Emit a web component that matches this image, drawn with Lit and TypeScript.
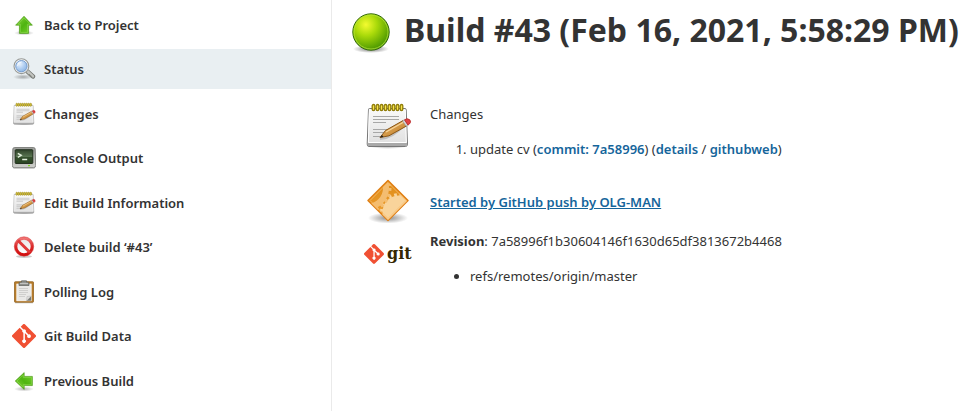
import { LitElement, html, css, svg, type TemplateResult } from "lit";
import { customElement, property } from "lit/decorators.js";

const arrow = (turn: number) => html`<svg viewBox="0 0 24 24" aria-hidden="true">
  <defs>
    <linearGradient id="g" x1="0" y1="0" x2="1" y2="1">
      <stop offset="0" stop-color="#8ad83e" /><stop offset=".5" stop-color="#4fb411" /><stop offset="1" stop-color="#77d32d" />
    </linearGradient>
    <radialGradient id="s"><stop offset="0" stop-color="#000" stop-opacity=".3" /><stop offset="1" stop-color="#000" stop-opacity="0" /></radialGradient>
  </defs>
  <ellipse cx="12" cy="20" rx="10" ry="2.5" fill="url(#s)" />
  <g transform="rotate(${turn} 12 12)">
    <path d="M12 3.2 L20.4 12.2 H16.6 V20.4 H7.4 V12.2 H3.6 Z" fill="url(#g)" stroke="#46940f" stroke-width=".6" stroke-linejoin="round" />
    <path d="M12 4.9 L18 11.3 H15.6 V19.4 H8.4 V11.3 H6 Z" fill="none" stroke="#a5e86c" stroke-width=".7" opacity=".6" />
  </g>
</svg>`;

const magnifier = html`<svg viewBox="0 0 24 24" aria-hidden="true">
  <defs>
    <radialGradient id="l" cx=".35" cy=".3" r=".8"><stop offset="0" stop-color="#eaf3fd" /><stop offset=".5" stop-color="#b3d0f2" /><stop offset="1" stop-color="#86b0e2" /></radialGradient>
    <radialGradient id="s"><stop offset="0" stop-color="#000" stop-opacity=".3" /><stop offset="1" stop-color="#000" stop-opacity="0" /></radialGradient>
  </defs>
  <ellipse cx="11" cy="20" rx="10" ry="2.8" fill="url(#s)" />
  <path d="M15.3 14.4 L20.9 19.4" stroke="#757873" stroke-width="4.6" stroke-linecap="round" />
  <path d="M15.5 14.4 L20.8 19.2" stroke="#c3c5c1" stroke-width="2.8" stroke-linecap="round" />
  <path d="M17 17.1 L20.4 20.1" stroke="#8b8e89" stroke-width="1" />
  <circle cx="9.4" cy="9.2" r="7.4" fill="#fbfbfb" stroke="#969996" stroke-width="1.1" />
  <circle cx="9.4" cy="9.2" r="5.7" fill="url(#l)" stroke="#6c94c6" stroke-width=".9" />
  <path d="M5.5 9 A4 4 0 0 1 9.5 5.1" fill="none" stroke="#fff" stroke-width="1" opacity=".7" />
</svg>`;

const notepad = html`<svg viewBox="0 0 48 48" aria-hidden="true">
  <defs>
    <linearGradient id="p" x1="0" y1="0" x2="0" y2="1"><stop offset="0" stop-color="#fafafa" /><stop offset="1" stop-color="#dedede" /></linearGradient>
    <linearGradient id="w" x1="0" y1="0" x2="1" y2="1"><stop offset="0" stop-color="#f0c078" /><stop offset="1" stop-color="#b9741b" /></linearGradient>
    <radialGradient id="s"><stop offset="0" stop-color="#000" stop-opacity=".35" /><stop offset="1" stop-color="#000" stop-opacity="0" /></radialGradient>
  </defs>
  <ellipse cx="24" cy="44" rx="20" ry="3" fill="url(#s)" />
  <path d="M5.500 6.500 H41 Q42 6.500 42.200 7.500 L43.500 42 Q43.500 44.500 41.500 44.500 H5 Q3 44.500 3.200 42 L4.500 7.500 Q4.500 6.500 5.500 6.500 Z" fill="url(#p)" stroke="#777" />
  <path d="M3.600 41 H43.200 L43 43.900 H3.800 Z" fill="#a9a9a9" />
  <path d="M5.300 8 L4.400 40.500 H42.300 L41.300 8" fill="none" stroke="#fff" />
  <path d="M9 14.500 H35 M9 17.500 H35 M9 20.500 H22 M9 27.500 H26 M9 30.500 H22 M9 34.500 H17" stroke="#a7a7a7" />
  ${[9.5, 13.5, 17.5, 21.5, 25.5, 29.5, 33.5, 37.5].map(
    (x) => svg`<rect x=${x - 1.3} y="2.500" width="2.600" height="6" rx="1.300" fill="#f9e64a" stroke="#8f7c08" stroke-width="1.300" />`
  )}
  <path d="M16 36.500 Q28 36 39 24" fill="none" stroke="#000" stroke-opacity=".16" stroke-width="3" />
  <path d="M16 35.500 L21.500 28.500 L39 18.600 L42.500 24 L25 33.800 Z" fill="url(#w)" stroke="#8a5616" stroke-linejoin="round" />
  <path d="M22 30 L39.800 20" stroke="#f8d69b" stroke-width="1.200" />
  <path d="M16 35.500 L18 33 L19.500 35 Z" fill="#222" />
  <path d="M38.500 18.900 L40.500 17.800 L44 23.100 L42 24.200 Z" fill="#d6d6d6" stroke="#888" stroke-width=".5" />
  <path d="M40.500 17.800 Q43 15.700 45.700 17.700 Q48 20.500 44 23.100 Z" fill="#e34343" stroke="#b31f1f" stroke-width=".8" />
</svg>`;

const terminal = html`<svg viewBox="0 0 24 24" aria-hidden="true">
  <defs>
    <linearGradient id="t" x1="0" y1="0" x2="0" y2="1"><stop offset="0" stop-color="#2f4229" /><stop offset=".5" stop-color="#587450" /><stop offset=".52" stop-color="#35502d" /><stop offset="1" stop-color="#2a4422" /></linearGradient>
    <linearGradient id="b" x1="0" y1="0" x2="0" y2="1"><stop offset="0" stop-color="#9a9c98" /><stop offset="1" stop-color="#cfd0cc" /></linearGradient>
  </defs>
  <path d="M2 21.500 H22 L23 22.500 H1 Z" fill="#bbb" />
  <path d="M2.500 1.500 H21.500 Q23 1.500 23.200 3 L23.700 19.500 Q23.700 21.700 21.500 21.700 H2.500 Q.3 21.700 .3 19.500 L.8 3 Q1 1.500 2.500 1.500 Z" fill="url(#b)" stroke="#70726e" stroke-width=".8" />
  <rect x="3.200" y="3.700" width="17.600" height="13.800" rx=".8" fill="url(#t)" stroke="#1c2a17" stroke-width=".9" />
  <path d="M5.800 7.300 L9.200 9.300 L5.800 11.300 M10.200 13.500 H15.200" fill="none" stroke="#e3f0dd" stroke-width="1.400" />
  <rect x="16" y="19" width="2" height="1.200" fill="#80d820" />
</svg>`;

const forbidden = html`<svg viewBox="0 0 24 24" aria-hidden="true">
  <defs>
    <linearGradient id="r" x1="0" y1="0" x2="0" y2="1"><stop offset="0" stop-color="#f17373" /><stop offset=".5" stop-color="#db2929" /><stop offset="1" stop-color="#d21010" /></linearGradient>
    <linearGradient id="i" x1="0" y1="0" x2="0" y2="1"><stop offset="0" stop-color="#e8e8e8" /><stop offset="1" stop-color="#fff" /></linearGradient>
  </defs>
  <ellipse cx="12" cy="21.500" rx="8" ry="1.500" fill="#ccc" />
  <circle cx="12" cy="11.500" r="8.200" fill="url(#i)" stroke="url(#r)" stroke-width="3" />
  <path d="M6 5.500 L18 17.500" stroke="#e03a3a" stroke-width="3" />
  <circle cx="12" cy="11.500" r="9.700" fill="none" stroke="#d03030" stroke-width=".5" />
</svg>`;

const clipboard = html`<svg viewBox="0 0 24 24" aria-hidden="true">
  <rect x="3" y="22" width="18" height="1.500" fill="#ddd" />
  <rect x="2.500" y="1.700" width="19" height="20.600" rx=".8" fill="#b77b29" stroke="#8b5a16" stroke-width=".7" />
  <rect x="4.800" y="4" width="14.400" height="16.800" fill="#e9e9e7" stroke="#fff" stroke-width=".7" />
  <path d="M7 8.500 H16 M7 10.500 H16 M7 12.500 H16 M7 14.500 H14 M7 16.500 H13" stroke="#cfcfcd" />
  <path d="M19.200 16 V20.800 H14.500 Z" fill="#777973" />
  <path d="M14.500 20.800 L15 16.500 L19.200 16 Z" fill="#dededc" stroke="#aaa" stroke-width=".4" />
  <path d="M7 5.500 V3 Q7 2.200 8 2.200 H9.500 V.8 H14.500 V2.200 H16 Q17 2.200 17 3 V5.500 Z" fill="#8f918d" stroke="#5c5e5a" stroke-width=".7" />
  <path d="M8 3.400 H16" stroke="#c9cac7" />
</svg>`;

const gitMark = svg`
  <path d="M23.550 10.930 L13.070 .450 a1.550 1.550 0 0 0 -2.190 0 L8.710 2.630 l2.760 2.760 a1.840 1.840 0 0 1 2.330 2.340 l2.660 2.660 a1.840 1.840 0 1 1 -1.100 1.040 l-2.480 -2.480 v6.530 a1.840 1.840 0 1 1 -1.510 -.050 V8.840 a1.840 1.840 0 0 1 -1 -2.410 L7.650 3.700 .450 10.880 a1.550 1.550 0 0 0 0 2.190 l10.480 10.480 a1.550 1.550 0 0 0 2.190 0 l10.430 -10.430 a1.550 1.550 0 0 0 0 -2.190" fill="#f05033" />`;

const git = html`<svg viewBox="0 0 24 24" aria-hidden="true">${gitMark}</svg>`;

const gitLogo = html`<svg viewBox="0 0 48 48" role="img" aria-label="git">
  <g transform="translate(0 1) scale(.83)">${gitMark}</g>
  <text x="23" y="16" class="wordmark">git</text>
</svg>`;

const ball = html`<svg viewBox="0 0 40 40" role="img" aria-label="Success">
  <defs>
    <radialGradient id="b" cx=".36" cy=".3" r=".72"><stop offset="0" stop-color="#f4fb30" /><stop offset=".42" stop-color="#aada0a" /><stop offset="1" stop-color="#489600" /></radialGradient>
    <radialGradient id="s"><stop offset="0" stop-color="#000" stop-opacity=".55" /><stop offset="1" stop-color="#000" stop-opacity="0" /></radialGradient>
  </defs>
  <ellipse cx="19" cy="36" rx="18" ry="4" fill="url(#s)" />
  <circle cx="19" cy="19" r="18.200" fill="url(#b)" stroke="#33680b" stroke-width="1" />
  <circle cx="19" cy="19" r="17" fill="none" stroke="#b9e63c" stroke-width="1" opacity=".75" />
</svg>`;

const trigger = html`<svg viewBox="0 0 48 48" aria-hidden="true">
  <defs>
    <linearGradient id="o" x1="0" y1="0" x2="0" y2="1"><stop offset="0" stop-color="#df8d17" /><stop offset="1" stop-color="#ee9f34" /></linearGradient>
    <radialGradient id="s"><stop offset="0" stop-color="#000" stop-opacity=".45" /><stop offset="1" stop-color="#000" stop-opacity="0" /></radialGradient>
    <clipPath id="c"><path d="M24 4 L43 23 L24 42 L5 23 Z" /></clipPath>
  </defs>
  <ellipse cx="24" cy="40" rx="20" ry="5.500" fill="url(#s)" />
  <path d="M24 2.500 L44 22.500 L24 42.500 L4 22.500 Z" fill="url(#o)" stroke="#e07f14" stroke-width="1.500" stroke-linejoin="round" />
  <g clip-path="url(#c)" fill="none">
    <circle cx="35" cy="34" r="16.500" fill="#f9d49b" />
    <circle cx="35" cy="34" r="17.500" stroke="#f9d49b" stroke-width="3" stroke-dasharray="2.700 2.800" />
    <circle cx="3" cy="10" r="19" stroke="#f4bd70" stroke-width="6" />
    <circle cx="3" cy="10" r="23" stroke="#f4bd70" stroke-width="3" stroke-dasharray="3 3.020" />
  </g>
  <path d="M24 4.500 L42 22.500 L24 40.500 L6 22.500 Z" fill="none" stroke="#f9bd6c" stroke-width=".8" />
</svg>`;

const tasks: { label: string; icon: TemplateResult; current?: boolean }[] = [
  { label: "Back to Project", icon: arrow(0) },
  { label: "Status", icon: magnifier, current: true },
  { label: "Changes", icon: notepad },
  { label: "Console Output", icon: terminal },
  { label: "Edit Build Information", icon: notepad },
  { label: "Delete build ‘#43’", icon: forbidden },
  { label: "Polling Log", icon: clipboard },
  { label: "Git Build Data", icon: git },
  { label: "Previous Build", icon: arrow(-90) },
];

@customElement("ui-icon")
class UiIcon extends LitElement {
  @property({ attribute: false }) art?: TemplateResult;

  static styles = css`
    :host { display: block; flex: none; }
    svg { display: block; width: 100%; height: 100%; }
    .wordmark { font: bold 16px "DejaVu Serif", serif; fill: #362701; }
  `;

  render() {
    return this.art;
  }
}

@customElement("task-list")
class TaskList extends LitElement {
  static styles = css`
    :host { display: block; }
    .tasks { list-style: none; margin: 0; padding: 5px 0 0; }
    .item { margin-bottom: 4px; }
    .item:nth-child(even) { margin-bottom: 5px; }
    .item:last-child { margin-bottom: 0; }
    .task {
      display: flex; align-items: center; gap: 8px;
      min-height: 40px; padding: 0 12px; box-sizing: border-box;
      color: #333; font-weight: 600; text-decoration: none;
    }
    .task:hover, .current { background: #e9eff2; }
    .icon { width: 24px; height: 24px; }
  `;

  render() {
    return html`<nav aria-label="Build"><ul class="tasks">
      ${tasks.map((t) => html`<li class="item">
        <a class="task ${t.current ? "current" : ""}" href="#"><ui-icon class="icon" .art=${t.icon}></ui-icon>${t.label}</a>
      </li>`)}
    </ul></nav>`;
  }
}

@customElement("app-root")
class AppRoot extends LitElement {
  static styles = css`
    :host {
      display: flex; min-height: 100vh; background: #fff; color: #333;
      font: 13px/20px "Noto Sans", "Open Sans", sans-serif;
    }
    .side { flex: 0 0 331px; border-right: 1px solid #eaeaea; }
    .main { flex: 1; min-width: 0; padding: 12px 0 0 20px; }
    .head { display: flex; gap: 12px; }
    .ball { width: 40px; height: 40px; margin-top: 1px; }
    .title { margin: 0; font-size: 32px; line-height: 36px; font-weight: 700; }
    .summary { display: grid; grid-template-columns: 48px 1fr; column-gap: 18px; margin: 49px 0 0 12px; }
    .pic { width: 48px; height: 48px; }
    .changes { padding: 2px 0 19px; }
    .cause { padding: 14px 0 19px; }
    .link { color: #15659b; font-weight: 600; text-decoration: none; }
    .line { text-decoration: underline; }
    .list { margin: 15px 0 0; padding-left: 40px; }
    .logo { margin-top: 12px; }
  `;

  render() {
    return html`
      <aside class="side"><task-list></task-list></aside>
      <main class="main">
        <header class="head">
          <ui-icon class="ball" .art=${ball}></ui-icon>
          <h1 class="title">Build #43 (Feb 16, 2021, 5:58:29 PM)</h1>
        </header>
        <section class="summary">
          <ui-icon class="pic" .art=${notepad}></ui-icon>
          <div class="changes">
            Changes
            <ol class="list">
              <li>update cv (<a class="link" href="#">commit: 7a58996</a>) (<a class="link" href="#">details</a> / <a class="link" href="#">githubweb</a>)</li>
            </ol>
          </div>
          <ui-icon class="pic" .art=${trigger}></ui-icon>
          <div class="cause"><a class="link line" href="#">Started by GitHub push by OLG-MAN</a></div>
          <ui-icon class="pic logo" .art=${gitLogo}></ui-icon>
          <div>
            <b>Revision</b>: 7a58996f1b30604146f1630d65df3813672b4468
            <ul class="list"><li>refs/remotes/origin/master</li></ul>
          </div>
        </section>
      </main>
    `;
  }
}
